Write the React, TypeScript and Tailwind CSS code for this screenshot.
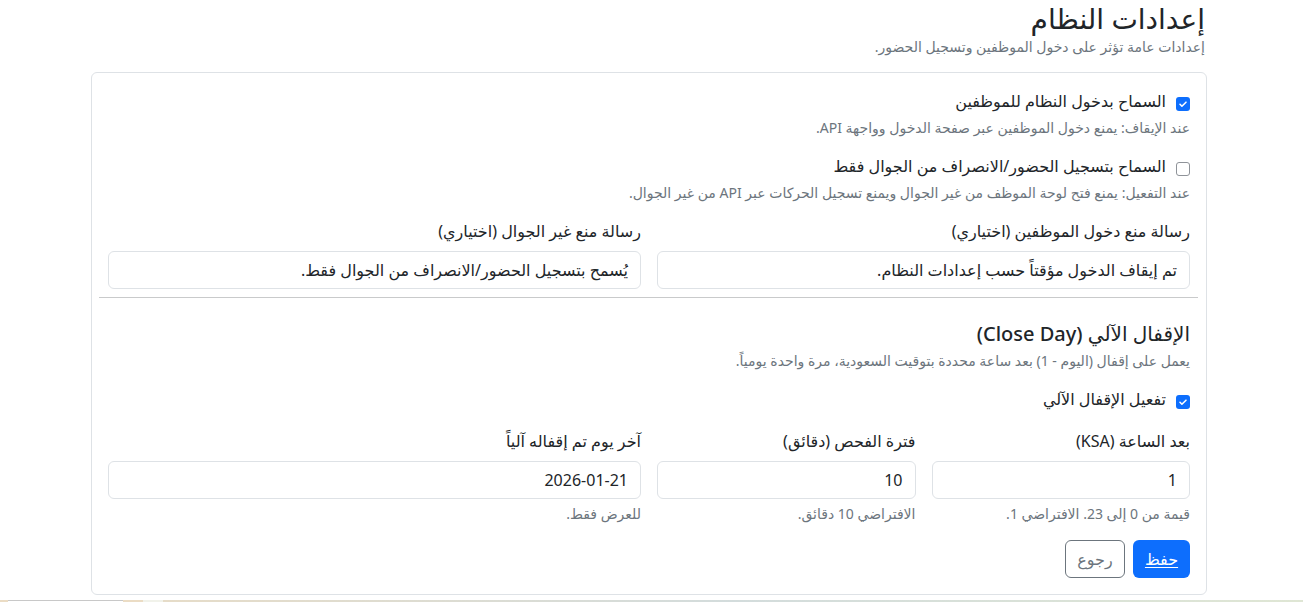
import React from "react";

const FONT = "font-['Segoe_UI','Noto_Sans','DejaVu_Sans',sans-serif]";

function Check({ checked }: { checked: boolean }) {
  return checked ? (
    <span className="mt-[8px] flex h-[14px] w-[14px] shrink-0 items-center justify-center rounded-[3px] bg-[#0d6efd]">
      <svg viewBox="0 0 20 20" className="h-[12px] w-[12px]">
        <path d="M5 10.5l3.2 3.2L15 7" fill="none" stroke="#fff" strokeWidth="2.6" strokeLinecap="round" strokeLinejoin="round" />
      </svg>
    </span>
  ) : (
    <span className="mt-[8px] block h-[14px] w-[14px] shrink-0 rounded-[3px] border border-[#8f9399] bg-white" />
  );
}

function CheckRow({ checked, label }: { checked: boolean; label: string }) {
  return (
    <label className="flex items-start gap-[10px] text-[16px] leading-6 text-[#212529]">
      <Check checked={checked} />
      <span>{label}</span>
    </label>
  );
}

function Field({ label, value, help }: { label: string; value: string; help?: string }) {
  return (
    <div className="flex flex-col">
      <div className="mb-2 text-[16px] leading-6 text-[#212529]">{label}</div>
      <div className="flex h-[38px] items-center rounded-[6px] border border-[#dee2e6] bg-white px-3 text-[16px] text-[#212529]">
        {value}
      </div>
      {help && <div className="mt-1 text-[14px] leading-[21px] text-[#6c757d]">{help}</div>}
    </div>
  );
}

export default function App() {
  return (
    <div dir="rtl" className={`${FONT} h-[603px] overflow-hidden bg-white`}>
      <div className="mr-[96px] w-[1116px]">
        <div className="pr-[2px]">
          <h3 className="text-[28px] font-medium leading-[36px] text-[#212529]">إعدادات النظام</h3>
          <p className="text-[14px] leading-[21px] text-[#6c757d]">إعدادات عامة تؤثر على دخول الموظفين وتسجيل الحضور.</p>
        </div>

        <div className="mt-[15px] rounded-[6px] border border-[#dee2e6] p-4">
          <CheckRow checked label="السماح بدخول النظام للموظفين" />
          <div className="mt-1 text-[14px] leading-[21px] text-[#6c757d]">
            عند الإيقاف: يمنع دخول الموظفين عبر صفحة الدخول وواجهة API.
          </div>

          <div className="mt-4">
            <CheckRow checked={false} label="السماح بتسجيل الحضور/الانصراف من الجوال فقط" />
            <div className="mt-1 text-[14px] leading-[21px] text-[#6c757d]">
              عند التفعيل: يمنع فتح لوحة الموظف من غير الجوال ويمنع تسجيل الحركات عبر API من غير الجوال.
            </div>
          </div>

          <div className="mt-4 grid grid-cols-2 gap-4">
            <Field label="رسالة منع دخول الموظفين (اختياري)" value="تم إيقاف الدخول مؤقتاً حسب إعدادات النظام." />
            <Field label="رسالة منع غير الجوال (اختياري)" value="يُسمح بتسجيل الحضور/الانصراف من الجوال فقط." />
          </div>

          <hr className="-mr-2 -ml-[9px] mt-2 border-0 border-t border-[#c9cacb]" />

          <h5 className="mt-6 text-[20px] font-medium leading-6 text-[#212529]">الإقفال الآلي (Close Day)</h5>
          <div className="mt-1 text-[14px] leading-[21px] text-[#6c757d]">
            يعمل على إقفال (اليوم - 1) بعد ساعة محددة بتوقيت السعودية، مرة واحدة يومياً.
          </div>

          <div className="mt-4">
            <CheckRow checked label="تفعيل الإقفال الآلي" />
          </div>

          <div className="mt-[18px] grid grid-cols-4 gap-4">
            <Field label="بعد الساعة (KSA)" value="1" help="قيمة من 0 إلى 23. الافتراضي 1." />
            <Field label="فترة الفحص (دقائق)" value="10" help="الافتراضي 10 دقائق." />
            <div className="col-span-2">
              <Field label="آخر يوم تم إقفاله آلياً" value="2026-01-21" help="للعرض فقط." />
            </div>
          </div>

          <div className="mt-4 flex gap-2">
            <button className="flex h-[38px] w-[57px] items-center justify-center rounded-[6px] bg-[#0d6efd] text-[16px] text-white underline underline-offset-2">
              حفظ
            </button>
            <button className="flex h-[38px] w-[60px] items-center justify-center rounded-[6px] border border-[#6c757d] bg-white text-[16px] text-[#6c757d]">
              رجوع
            </button>
          </div>
        </div>
      </div>

      <div dir="ltr" className="mt-[5px] flex h-[2px] w-full">
        <div className="w-[8px] bg-[#ebdcc4]" />
        <div className="w-[115px] border-t border-[#c8c8c8] bg-white" />
        <div className="w-[20px] bg-[#ebdcc4]" />
        <div className="w-[20px] bg-[#f1f2ea]" />
        <div className="flex-1 bg-gradient-to-r from-[#e6dcc8] via-[#d3dcdc] to-[#dfe6d4]" />
      </div>
    </div>
  );
}
